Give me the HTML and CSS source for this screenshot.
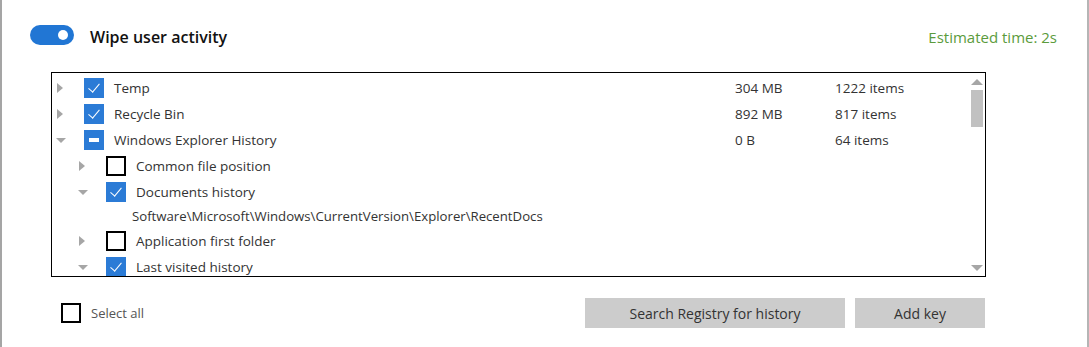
FILE: index.html
```html
<!DOCTYPE html>
<html lang="en">

<head>
    <meta charset="UTF-8">
    <meta name="viewport" content="width=device-width, initial-scale=1.0">
    <title>Wipe user activity</title>
    <link rel="stylesheet" href="styles.css">
</head>

<body>
    <div class="panel">
        <div class="header">
            <div class="toggle on"><span class="knob"></span></div>
            <p class="title">Wipe user activity</p>
            <p class="estimate">Estimated time: 2s</p>
        </div>

        <div class="tree">
            <ul class="rows">
                <li class="row">
                    <span class="exp closed"></span>
                    <span class="check checked"></span>
                    <span class="name">Temp</span>
                    <span class="size">304 MB</span>
                    <span class="count">1222 items</span>
                </li>
                <li class="row">
                    <span class="exp closed"></span>
                    <span class="check checked"></span>
                    <span class="name">Recycle Bin</span>
                    <span class="size">892 MB</span>
                    <span class="count">817 items</span>
                </li>
                <li class="row">
                    <span class="exp open"></span>
                    <span class="check partial"></span>
                    <span class="name">Windows Explorer History</span>
                    <span class="size">0 B</span>
                    <span class="count">64 items</span>
                </li>
                <li class="row sub">
                    <span class="exp closed"></span>
                    <span class="check"></span>
                    <span class="name">Common file position</span>
                </li>
                <li class="row sub">
                    <span class="exp open"></span>
                    <span class="check checked"></span>
                    <span class="name">Documents history</span>
                </li>
                <li class="path">Software\Microsoft\Windows\CurrentVersion\Explorer\RecentDocs</li>
                <li class="row sub">
                    <span class="exp closed"></span>
                    <span class="check"></span>
                    <span class="name">Application first folder</span>
                </li>
                <li class="row sub">
                    <span class="exp open"></span>
                    <span class="check checked"></span>
                    <span class="name">Last visited history</span>
                </li>
            </ul>

            <div class="scrollbar">
                <span class="arrow up"></span>
                <span class="thumb"></span>
                <span class="arrow down"></span>
            </div>
        </div>

        <div class="footer">
            <label class="select-all">
                <span class="check"></span>
                <span>Select all</span>
            </label>
            <div class="buttons">
                <button class="btn wide">Search Registry for history</button>
                <button class="btn">Add key</button>
            </div>
        </div>
    </div>
</body>

</html>
```

FILE: styles.css
```css
* {
    margin: 0;
    padding: 0;
    box-sizing: border-box;
}

body {
    width: 1089px;
    height: 347px;
    background: #fff;
    font-family: "Open Sans", "Noto Sans", sans-serif;
    color: #333;
    overflow: hidden;
}

.panel {
    height: 347px;
    border-left: 2px solid #a5a5a5;
    border-right: 2px solid #b5b5b5;
    padding: 25px 0 0 28px;
    width: 1089px;
}

.header {
    display: flex;
    align-items: center;
    height: 20px;
    padding-right: 30px;
}

.toggle {
    width: 44px;
    height: 20px;
    border-radius: 10px;
    background: #2176d4;
    position: relative;
}

.toggle .knob {
    position: absolute;
    right: 6px;
    top: 5px;
    width: 10px;
    height: 10px;
    border-radius: 50%;
    background: #fff;
}

.title {
    margin: 3px 0 0 16px;
    font-size: 16px;
    font-weight: 600;
    color: #111;
}

.estimate {
    margin: 3px 0 0 auto;
    font-size: 15px;
    color: #5b9b3c;
}

/* list */

.tree {
    margin: 27px 0 0 21px;
    width: 935px;
    height: 205px;
    border: 1px solid #000;
    display: flex;
    overflow: hidden;
}

.rows {
    list-style: none;
    flex: 1;
    padding-top: 2px;
    font-size: 13.5px;
}

.row {
    display: flex;
    align-items: center;
    height: 26px;
    padding-left: 4px;
}

.row.sub {
    padding-left: 26px;
}

.exp {
    width: 10px;
    height: 10px;
    position: relative;
}

.exp.closed::before {
    content: "";
    position: absolute;
    left: 1px;
    top: 0;
    border-left: 6px solid #a6a6a6;
    border-top: 5px solid transparent;
    border-bottom: 5px solid transparent;
}

.exp.open::before {
    content: "";
    position: absolute;
    left: 0;
    top: 3px;
    border-top: 5px solid #a6a6a6;
    border-left: 5px solid transparent;
    border-right: 5px solid transparent;
}

.check {
    width: 20px;
    height: 20px;
    border: 2px solid #000;
    position: relative;
    flex: none;
}

.row .check {
    margin-left: 18px;
}

.check.checked,
.check.partial {
    border: none;
    background: #2b7bd6;
}

.check.checked::after {
    content: "";
    position: absolute;
    left: 7px;
    top: 3px;
    width: 5px;
    height: 10px;
    border-right: 1px solid #fff;
    border-bottom: 1px solid #fff;
    transform: rotate(40deg);
}

.check.partial::after {
    content: "";
    position: absolute;
    left: 5px;
    top: 8px;
    width: 10px;
    height: 4px;
    background: #fff;
}

.name {
    margin-left: 10px;
    width: 621px;
}

.row.sub .name {
    width: auto;
}

.size {
    width: 100px;
}

.path {
    list-style: none;
    height: 23px;
    line-height: 22px;
    padding-left: 80px;
    font-size: 13.2px;
}

.scrollbar {
    width: 17px;
    display: flex;
    flex-direction: column;
    align-items: center;
    padding: 6px 0 5px;
}

.arrow {
    width: 0;
    height: 0;
    border-left: 6px solid transparent;
    border-right: 6px solid transparent;
}

.arrow.up {
    border-bottom: 6px solid #a6a6a6;
}

.arrow.down {
    margin-top: auto;
    border-top: 6px solid #a6a6a6;
}

.thumb {
    margin-top: 5px;
    width: 12px;
    height: 37px;
    background: #c1c1c1;
}

/* bottom */

.footer {
    display: flex;
    align-items: center;
    margin-top: 21px;
    width: 955px;
}

.select-all {
    display: flex;
    align-items: center;
    margin-left: 31px;
    font-size: 13px;
    color: #555;
}

.select-all span + span {
    margin-left: 10px;
}

.buttons {
    margin-left: auto;
    display: flex;
    gap: 10px;
}

.btn {
    height: 30px;
    width: 130px;
    border: none;
    background: #ccc;
    font-family: "Open Sans", "Noto Sans", sans-serif;
    font-size: 14px;
    color: #333;
}

.btn.wide {
    width: 260px;
}
```
